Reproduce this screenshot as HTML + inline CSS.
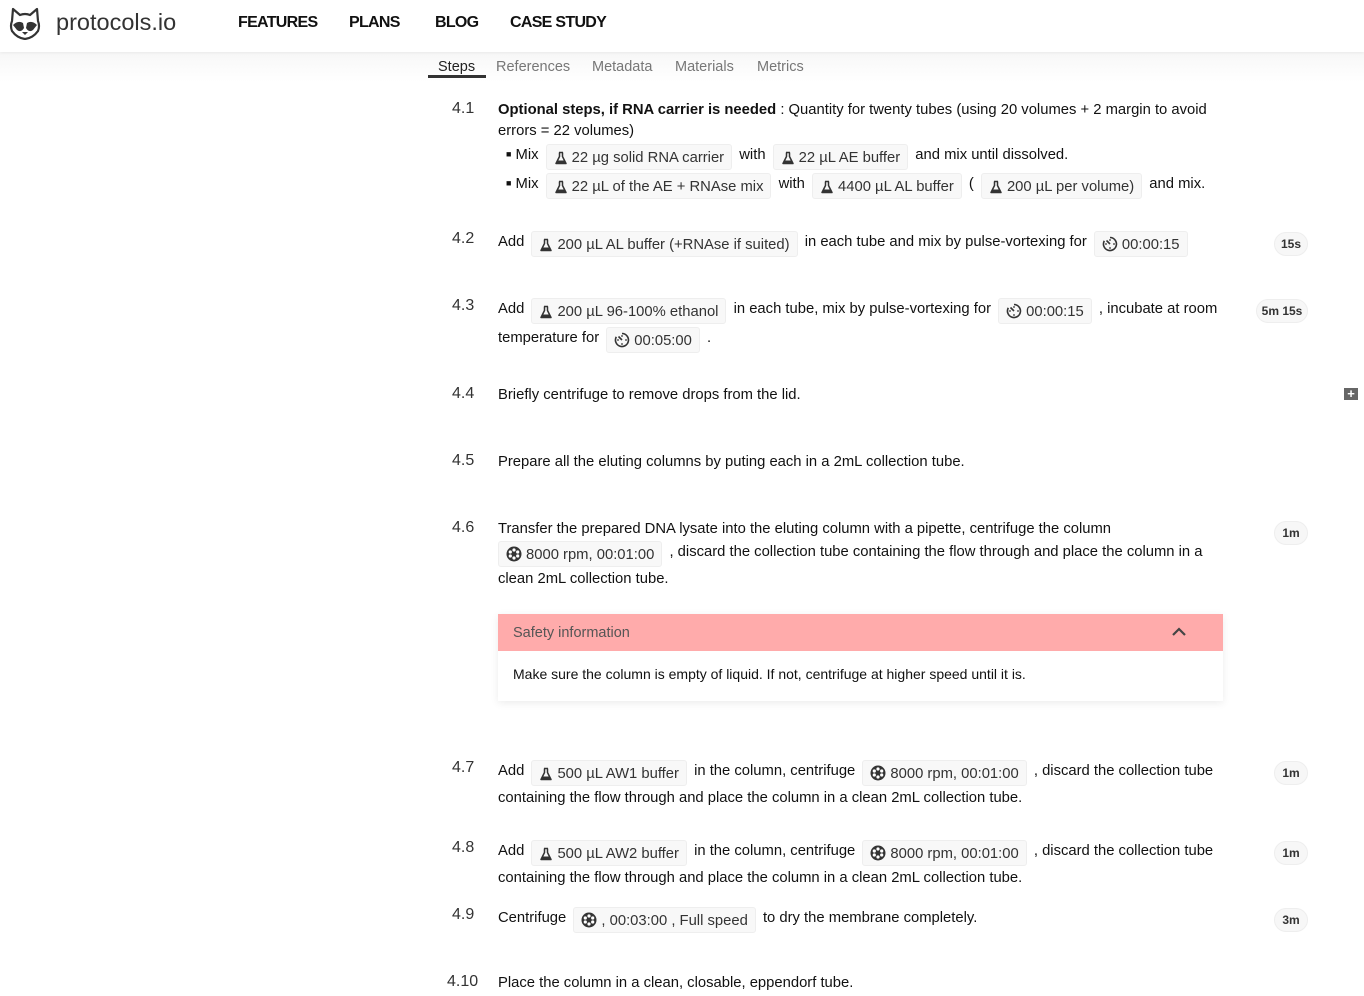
<!DOCTYPE html>
<html><head><meta charset="utf-8"><style>
*{margin:0;padding:0;box-sizing:border-box}
body{width:1364px;height:996px;overflow:hidden;background:#fff;font-family:"Liberation Sans",Arial,sans-serif;color:#111;position:relative;font-size:14.8px}
.hdr{position:absolute;left:0;top:0;width:1364px;height:52px;background:#fff;box-shadow:0 1px 3px rgba(0,0,0,.06);z-index:2}
.sub{position:absolute;left:0;top:52px;width:1364px;height:30px;background:linear-gradient(#f7f7f7,#fff)}
.logo{position:absolute;left:56px;top:9px;font-size:23.5px;color:#333}
.nav{position:absolute;top:14px;font-size:16px;font-weight:bold;color:#111;letter-spacing:-0.7px}
.tab{position:absolute;top:59px;font-size:14.5px;color:#777}
.n{position:absolute;left:452px;font-size:16px;color:#333}
.l{position:absolute;left:498px;white-space:nowrap;line-height:24px;height:24px}
.c{display:inline-block;background:#f8f8f8;border:1px solid #eee;border-radius:3px;padding:0 7px;height:26px;line-height:26px;color:#333;margin:0 3px;vertical-align:-3px}
.c svg{vertical-align:-3px;margin-right:4px}
.d{position:absolute;height:24px;line-height:22px;border:1px solid #eee;background:#f7f7f7;border-radius:12px;font-size:12px;font-weight:bold;color:#333;text-align:center}
</style></head><body>
<div class="hdr">
<svg style="position:absolute;left:8px;top:6px" width="34" height="34" viewBox="0 0 34 34"><path d="M5 3 L12 9 Q17 7 22 9 L29 3 L30 15 Q32 20 30 25 Q25 32 17 33 Q9 32 4 25 Q2 20 4 15 Z" fill="none" stroke="#333" stroke-width="2.2" stroke-linejoin="round"/><path d="M5 19 Q10 14 15 17 L16 22 Q13 27 9 24 Z M29 19 Q24 14 19 17 L18 22 Q21 27 25 24 Z" fill="#333"/><path d="M14 26 L20 26 L17 29 Z" fill="#333"/></svg>
<div class="logo">protocols.io</div>
<div class="nav" style="left:238px">FEATURES</div>
<div class="nav" style="left:349px">PLANS</div>
<div class="nav" style="left:435px">BLOG</div>
<div class="nav" style="left:510px">CASE STUDY</div>
</div>
<div class="sub"></div>
<div class="tab" style="left:438px;color:#222">Steps</div>
<div style="position:absolute;left:428px;top:75px;width:58px;height:3px;background:#333"></div>
<div class="tab" style="left:496px">References</div>
<div class="tab" style="left:592px">Metadata</div>
<div class="tab" style="left:675px">Materials</div>
<div class="tab" style="left:757px">Metrics</div>

<svg width="0" height="0" style="position:absolute"><defs>
<symbol id="f" viewBox="0 0 14 14"><path d="M5 1.5h4M5.5 1.5v4L2 12.5h10L8.5 5.5v-4" fill="none" stroke="#333" stroke-width="1.5" stroke-linejoin="round"/><path d="M3.5 9.5h7L12 12.5H2z" fill="#333"/></symbol>
<symbol id="t" viewBox="0 0 16 16"><path d="M8 1.5A6.5 6.5 0 1 1 2.3 4.8" fill="none" stroke="#333" stroke-width="1.6"/><path d="M8 8L4.5 4.5" stroke="#333" stroke-width="1.6"/><circle cx="8" cy="4" r=".9" fill="#333"/><circle cx="12" cy="8" r=".9" fill="#333"/><circle cx="8" cy="12" r=".9" fill="#333"/><circle cx="4" cy="8" r=".9" fill="#333"/></symbol>
<symbol id="g" viewBox="0 0 16 16"><circle cx="8" cy="8" r="7.5" fill="#333"/><circle cx="8" cy="4" r="1.6" fill="#fff"/><circle cx="8" cy="12" r="1.6" fill="#fff"/><circle cx="4.3" cy="6" r="1.6" fill="#fff"/><circle cx="11.7" cy="6" r="1.6" fill="#fff"/><circle cx="4.3" cy="10" r="1.6" fill="#fff"/><circle cx="11.7" cy="10" r="1.6" fill="#fff"/></symbol>
</defs></svg>

<div class="n" style="top:100px">4.1</div>
<div class="l" style="top:98px"><b>Optional steps, if RNA carrier is needed</b> : Quantity for twenty tubes (using 20 volumes + 2 margin to avoid</div>
<div class="l" style="top:119px">errors = 22 volumes)</div>
<div class="l" style="top:142px;left:506px"><span style="font-size:9px;vertical-align:2px">■</span> Mix <span class="c"><svg width="14" height="14"><use href="#f"/></svg>22 µg solid RNA carrier</span> with <span class="c"><svg width="14" height="14"><use href="#f"/></svg>22 µL AE buffer</span> and mix until dissolved.</div>
<div class="l" style="top:171px;left:506px"><span style="font-size:9px;vertical-align:2px">■</span> Mix <span class="c"><svg width="14" height="14"><use href="#f"/></svg>22 µL of the AE + RNAse mix</span> with <span class="c"><svg width="14" height="14"><use href="#f"/></svg>4400 µL AL buffer</span> ( <span class="c"><svg width="14" height="14"><use href="#f"/></svg>200 µL per volume)</span> and mix.</div>

<div class="n" style="top:230px">4.2</div>
<div class="l" style="top:230px">Add <span class="c"><svg width="14" height="14"><use href="#f"/></svg>200 µL AL buffer (+RNAse if suited)</span> in each tube and mix by pulse-vortexing for <span class="c"><svg width="16" height="16"><use href="#t"/></svg>00:00:15</span></div>
<div class="d" style="left:1274px;top:232px;width:34px">15s</div>

<div class="n" style="top:297px">4.3</div>
<div class="l" style="top:297px">Add <span class="c"><svg width="14" height="14"><use href="#f"/></svg>200 µL 96-100% ethanol</span> in each tube, mix by pulse-vortexing for <span class="c"><svg width="16" height="16"><use href="#t"/></svg>00:00:15</span> , incubate at room</div>
<div class="l" style="top:326px">temperature for <span class="c"><svg width="16" height="16"><use href="#t"/></svg>00:05:00</span> .</div>
<div class="d" style="left:1256px;top:299px;width:52px">5m 15s</div>

<div style="position:absolute;left:1344px;top:388px;width:14px;height:12px;background:#666;color:#fff;font-size:13px;line-height:12px;text-align:center;font-weight:bold">+</div>

<div class="n" style="top:385px">4.4</div>
<div class="l" style="top:383px">Briefly centrifuge to remove drops from the lid.</div>

<div class="n" style="top:452px">4.5</div>
<div class="l" style="top:450px">Prepare all the eluting columns by puting each in a 2mL collection tube.</div>

<div class="n" style="top:519px">4.6</div>
<div class="l" style="top:517px">Transfer the prepared DNA lysate into the eluting column with a pipette, centrifuge the column</div>
<div class="l" style="top:540px;left:495px"><span class="c"><svg width="16" height="16"><use href="#g"/></svg>8000 rpm, 00:01:00</span> , discard the collection tube containing the flow through and place the column in a</div>
<div class="l" style="top:567px">clean 2mL collection tube.</div>
<div class="d" style="left:1274px;top:521px;width:34px">1m</div>

<div style="position:absolute;left:498px;top:614px;width:725px;height:87px;background:#fff;box-shadow:0 2px 8px rgba(0,0,0,.08)">
<div style="height:37px;background:#ffabab;padding-left:15px;line-height:39px;color:#555;font-size:14.5px">Safety information</div>
<svg style="position:absolute;left:673px;top:12px" width="16" height="12"><path d="M2 9L8 3L14 9" fill="none" stroke="#444" stroke-width="2.2"/></svg>
<div style="padding:15px 0 0 15px;font-size:14px;color:#111">Make sure the column is empty of liquid. If not, centrifuge at higher speed until it is.</div>
</div>

<div class="n" style="top:759px">4.7</div>
<div class="l" style="top:759px">Add <span class="c"><svg width="14" height="14"><use href="#f"/></svg>500 µL AW1 buffer</span> in the column, centrifuge <span class="c"><svg width="16" height="16"><use href="#g"/></svg>8000 rpm, 00:01:00</span> , discard the collection tube</div>
<div class="l" style="top:786px">containing the flow through and place the column in a clean 2mL collection tube.</div>
<div class="d" style="left:1274px;top:761px;width:34px">1m</div>

<div class="n" style="top:839px">4.8</div>
<div class="l" style="top:839px">Add <span class="c"><svg width="14" height="14"><use href="#f"/></svg>500 µL AW2 buffer</span> in the column, centrifuge <span class="c"><svg width="16" height="16"><use href="#g"/></svg>8000 rpm, 00:01:00</span> , discard the collection tube</div>
<div class="l" style="top:866px">containing the flow through and place the column in a clean 2mL collection tube.</div>
<div class="d" style="left:1274px;top:841px;width:34px">1m</div>

<div class="n" style="top:906px">4.9</div>
<div class="l" style="top:906px">Centrifuge <span class="c"><svg width="16" height="16"><use href="#g"/></svg>, 00:03:00 , Full speed</span> to dry the membrane completely.</div>
<div class="d" style="left:1274px;top:908px;width:34px">3m</div>

<div class="n" style="top:973px;left:447px">4.10</div>
<div class="l" style="top:971px">Place the column in a clean, closable, eppendorf tube.</div>
</body></html>
